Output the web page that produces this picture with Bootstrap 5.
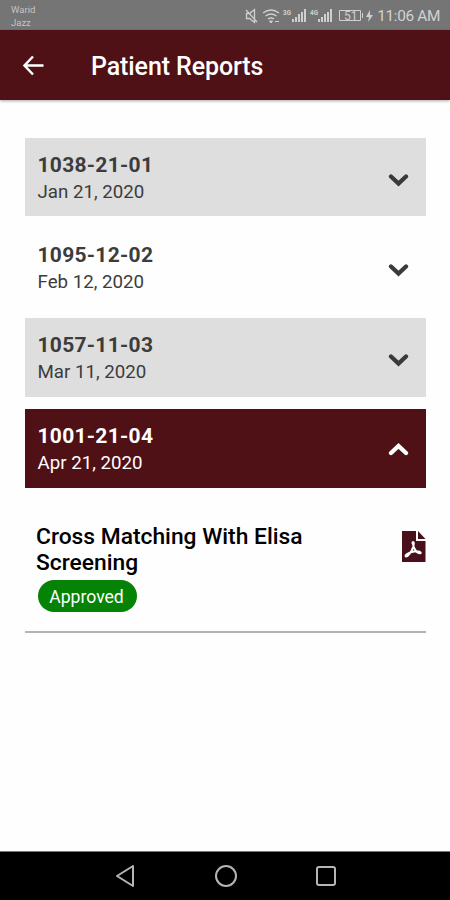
<!DOCTYPE html>
<html lang="en">
<head>
<meta charset="utf-8">
<meta name="viewport" content="width=device-width, initial-scale=1">
<title>Patient Reports</title>
<link href="https://cdn.jsdelivr.net/npm/bootstrap@5.3.0/dist/css/bootstrap.min.css" rel="stylesheet">
<style>
body{font-family:Roboto,"Liberation Sans",sans-serif;background:#fefefe;color:#000;height:900px;overflow:hidden}
svg{display:block;flex:none}
.status{height:30px;background:#757575;color:#d2d2d2;padding:0 10px 0 11px}
.carrier{font-size:9.5px;line-height:13px;padding-top:3px;color:#c4c4c4}
.clock{font-size:15.4px;line-height:30px;padding-top:1px;letter-spacing:-.35px;white-space:nowrap}
.appbar{height:70px;background:#4f1016;color:#fff;padding-left:22px;box-shadow:0 1px 3px #0005}
.appbar h1{font-size:25px;font-weight:500;margin:4px 0 0 46px;line-height:30px;letter-spacing:-.1px}
.reports{padding:38px 24px 0 25px;gap:12px}
.report{height:78.2px;padding:14px 17px 0 12.5px;color:#3c3c3c}
.report.shaded{background:#dedede}
.report.open{background:#4f1016;color:#fff;height:79px}
.code{font-size:21px;font-weight:700;line-height:27px;letter-spacing:.28px}
.date{font-size:18.7px;line-height:27px}
.chev{margin-top:20px}
.detail{padding:36px 0 19px 11px;border-bottom:2px solid #b5b1b1}
.test{font-size:22.8px;font-weight:500;line-height:26px;width:290px}
.pdf{margin-top:7px}
.state{background:#068306;font-size:17.6px;font-weight:400;height:32px;width:99px;margin:4px 0 0 2px;padding:0 2px 0 0;line-height:34px}
.navkeys{height:49px;background:#000;border-top:1px solid #777;gap:79px}
</style>
</head>
<body class="d-flex flex-column">
<header>
  <div class="status d-flex justify-content-between">
    <div class="carrier">Warid<br>Jazz</div>
    <div class="d-flex">
      <svg width="132" height="30" viewBox="246 0 132 30" fill="none" stroke="#cfcfcf" stroke-width="1.3">
        <path d="M247.500 13.500v5h3l5 4v-13l-5 4zM247 10l11 12"/>
        <path d="M264 13q8-6 16 0M266.500 16q5.500-4 11 0M269 19q3-2 6 0"/>
        <path d="M270.500 21h3l-1.500 2zM276 21.500h4" fill="#cfcfcf" stroke-width="1"/>
        <g fill="#cfcfcf" stroke="none">
          <path d="M293 19h2v3h-2zM296 17h2v5h-2zM299 14h2v8h-2zM302 12h2v10h-2zM305 9h2v13h-2z"/>
          <path d="M319 19h2v3h-2zM322 17h2v5h-2zM325 14h2v8h-2zM328 12h2v10h-2zM331 9h2v13h-2z"/>
          <path d="M371 10l-4 7h3l-1 5 5-7h-3z"/>
          <text x="284" y="15" font-size="7" font-weight="700" textLength="8" lengthAdjust="spacingAndGlyphs">3G</text>
          <text x="311" y="15" font-size="7" font-weight="700" textLength="8" lengthAdjust="spacingAndGlyphs">4G</text>
          <text x="345" y="20" font-size="12">51</text>
        </g>
        <path d="M340.500 10.500h21v10h-21zM363.500 13v5" stroke-width="1"/>
      </svg>
      <span class="clock">11:06 AM</span>
    </div>
  </div>
  <div class="appbar d-flex align-items-center">
    <svg width="23" height="22" viewBox="0 0 23 22" fill="none" stroke="#fff" stroke-width="2.500"><path d="M11 2.500L2.500 11.500l8.500 9M2.500 11.500H21.500"/></svg>
    <h1>Patient Reports</h1>
  </div>
</header>
<main class="reports d-flex flex-column flex-grow-1">
  <div class="report shaded d-flex justify-content-between">
    <div><div class="code">1038-21-01</div><div class="date">Jan 21, 2020</div></div>
    <svg class="chev" width="21" height="15" fill="none" stroke="#3a3a3a" stroke-width="4.300" stroke-linecap="round" viewBox="0 0 21 15"><path d="M3 4.500l7.500 7 7.500-7"/></svg>
  </div>
  <div class="report d-flex justify-content-between">
    <div><div class="code">1095-12-02</div><div class="date">Feb 12, 2020</div></div>
    <svg class="chev" width="21" height="15" fill="none" stroke="#3a3a3a" stroke-width="4.300" stroke-linecap="round" viewBox="0 0 21 15"><path d="M3 4.500l7.500 7 7.500-7"/></svg>
  </div>
  <div class="report shaded d-flex justify-content-between">
    <div><div class="code">1057-11-03</div><div class="date">Mar 11, 2020</div></div>
    <svg class="chev" width="21" height="15" fill="none" stroke="#3a3a3a" stroke-width="4.300" stroke-linecap="round" viewBox="0 0 21 15"><path d="M3 4.500l7.500 7 7.500-7"/></svg>
  </div>
  <section>
    <div class="report open d-flex justify-content-between">
      <div><div class="code">1001-21-04</div><div class="date">Apr 21, 2020</div></div>
      <svg class="chev" width="21" height="15" fill="none" stroke="#fff" stroke-width="4.300" stroke-linecap="round" viewBox="0 0 21 15"><path d="M3 10l7.500-7 7.500 7"/></svg>
    </div>
    <div class="detail">
      <div class="d-flex justify-content-between">
        <div class="test">Cross Matching With Elisa Screening</div>
        <svg class="pdf" width="25" height="32" viewBox="0 0 25 32">
          <path d="M1 0h14v10h9.500v21H1z" fill="#47101a"/>
          <path d="M17 0l7.500 8H17z" fill="#47101a"/>
          <path d="M12 13c-1.500-2 .800-3 .800-.500 0 4-3 9.500-6.300 12.500-2 1.500-3-.500-.500-2 4-2.500 10-3.500 13-2 2 1.300-.500 2-2.500.500-2.500-2-4-5-4.500-8.500z" fill="none" stroke="#fff" stroke-width="2"/>
        </svg>
      </div>
      <div class="badge rounded-pill state d-block">Approved</div>
    </div>
  </section>
</main>
<footer class="navkeys d-flex justify-content-center align-items-center">
  <svg width="22" height="24" viewBox="0 0 22 24" fill="none" stroke="#b5b5b5" stroke-width="2" stroke-linejoin="round"><path d="M19 2v20L3 12z"/></svg>
  <svg width="22" height="24" viewBox="0 0 22 24" fill="none" stroke="#b5b5b5" stroke-width="2"><circle cx="11" cy="12" r="10"/></svg>
  <svg width="20" height="24" viewBox="0 0 20 24" fill="none" stroke="#b5b5b5" stroke-width="2"><rect x="1" y="3" width="18" height="18" rx="2"/></svg>
</footer>
<script src="https://cdn.jsdelivr.net/npm/bootstrap@5.3.0/dist/js/bootstrap.bundle.min.js"></script>
</body>
</html>
